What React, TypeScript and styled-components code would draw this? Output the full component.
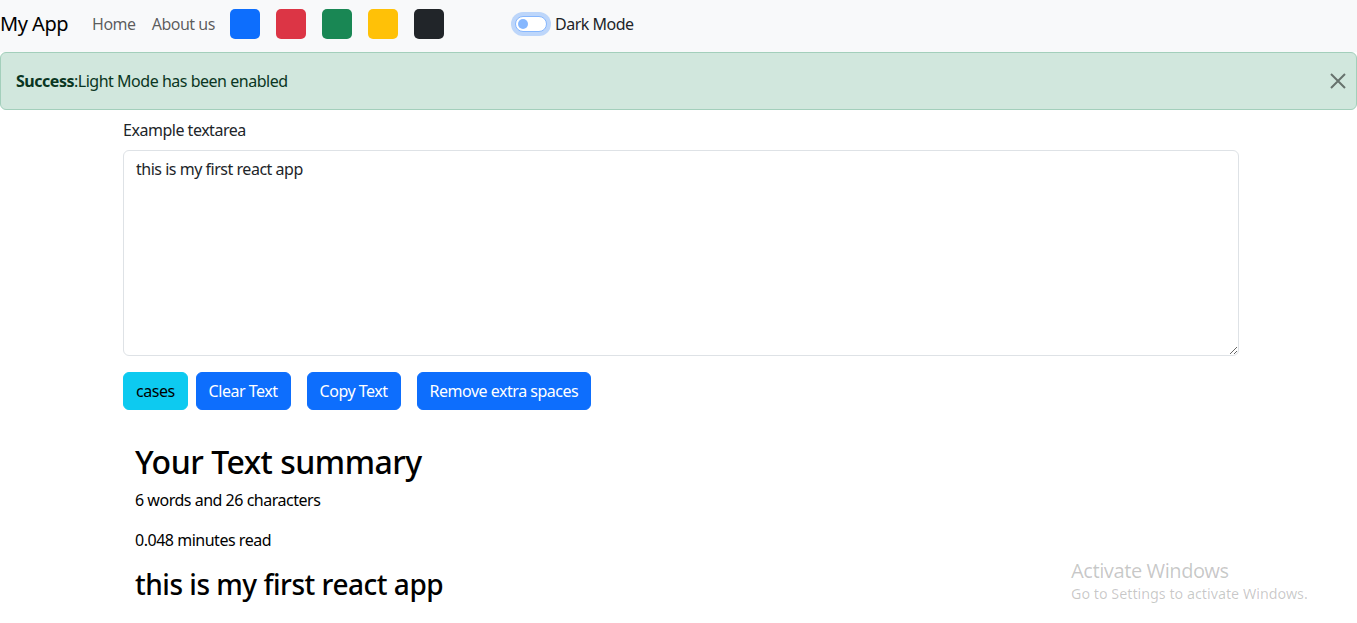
import React from "react";
import styled, { createGlobalStyle } from "styled-components";

const FONT = `"Noto Sans", "Open Sans", Arial, sans-serif`;

const Global = createGlobalStyle`
  html, body { margin: 0; padding: 0; }
  body {
    font-family: ${FONT};
    font-size: 16px;
    line-height: 1.5;
    letter-spacing: -0.03em;
    color: #212529;
    background: #fff;
  }
  * { box-sizing: border-box; }
`;

const Page = styled.div`
  position: relative;
  width: 1357px;
  height: 623px;
  overflow: hidden;
`;

const Navbar = styled.nav`
  display: flex;
  align-items: center;
  height: 52px;
  background: #f8f9fa;
  padding-bottom: 4px;
`;

const Brand = styled.span`
  font-size: 20px;
  color: #000;
  margin-right: 16px;
  line-height: 30px;
`;

const NavLink = styled.a`
  padding: 8px;
  color: rgba(0, 0, 0, 0.65);
  text-decoration: none;
  font-size: 16px;
`;

const Swatches = styled.div`
  display: flex;
  gap: 16px;
  margin-left: 7px;
`;

const Swatch = styled.div<{ $c: string }>`
  width: 30px;
  height: 30px;
  border-radius: 5px;
  background: ${(p) => p.$c};
`;

const SwitchWrap = styled.label`
  display: flex;
  align-items: center;
  margin-left: 71px;
  gap: 8px;
  color: #212529;
  font-size: 16px;
`;

const SwitchTrack = styled.span`
  position: relative;
  width: 32px;
  height: 16px;
  border-radius: 16px;
  background: #fff;
  border: 1px solid #86b7fe;
  box-shadow: 0 0 0 4px rgba(13, 110, 253, 0.25);
`;

const SwitchKnob = styled.span`
  position: absolute;
  left: 2px;
  top: 2px;
  width: 10px;
  height: 10px;
  border-radius: 50%;
  background: #86b7fe;
`;

const Alert = styled.div`
  display: flex;
  align-items: center;
  justify-content: space-between;
  background: #d1e7dd;
  border: 1px solid #a3cfbb;
  border-radius: 6px;
  color: #0a3622;
  padding: 16px 6px 16px 15px;
  height: 58px;
`;

const CloseBtn = styled.button`
  display: flex;
  align-items: center;
  justify-content: center;
  width: 24px;
  height: 24px;
  padding: 0;
  border: 0;
  background: transparent;
  opacity: 0.5;
`;

const Container = styled.main`
  width: 1116px;
  margin-left: 123px;
  padding-top: 8px;
`;

const Label = styled.label`
  display: block;
  margin-bottom: 8px;
`;

const TextArea = styled.textarea`
  display: block;
  width: 100%;
  height: 206px;
  padding: 6px 12px;
  font-family: ${FONT};
  font-size: 16px;
  line-height: 1.5;
  letter-spacing: -0.03em;
  color: #212529;
  border: 1px solid #dee2e6;
  border-radius: 6px;
  margin: 0 0 16px;
  outline: none;
`;

const ButtonRow = styled.div`
  display: flex;
`;

const Btn = styled.button<{ $info?: boolean; $mx?: number }>`
  font-family: ${FONT};
  font-size: 16px;
  line-height: 1.5;
  letter-spacing: -0.03em;
  padding: 6px 12px;
  height: 38px;
  border-radius: 6px;
  border: 1px solid ${(p) => (p.$info ? "#0dcaf0" : "#0d6efd")};
  background: ${(p) => (p.$info ? "#0dcaf0" : "#0d6efd")};
  color: ${(p) => (p.$info ? "#000" : "#fff")};
  margin: 0 ${(p) => p.$mx ?? 0}px;
`;

const Summary = styled.section`
  padding: 0 12px;
  margin-top: 33px;
`;

const H2 = styled.h2`
  font-size: 32px;
  font-weight: 500;
  line-height: 1.2;
  margin: 0 0 7px;
  color: #000;
`;

const P = styled.p`
  margin: 0 0 16px;
  color: #000;
`;

const H3 = styled.h3`
  font-size: 28px;
  font-weight: 500;
  line-height: 1.2;
  margin: 0;
  color: #000;
`;

const Watermark = styled.div`
  position: absolute;
  left: 1071px;
  top: 558px;
  color: rgba(0, 0, 0, 0.22);
  font-family: ${FONT};
`;

const WmTitle = styled.div`
  font-size: 20px;
  line-height: 26px;
`;

const WmSub = styled.div`
  font-size: 14.3px;
  line-height: 20px;
  letter-spacing: 0;
`;

export default function App() {
  return (
    <Page>
      <Global />
      <Navbar>
        <Brand>My App</Brand>
        <NavLink>Home</NavLink>
        <NavLink>About us</NavLink>
        <Swatches>
          {["#0d6efd", "#dc3545", "#198754", "#ffc107", "#212529"].map((c) => (
            <Swatch key={c} $c={c} />
          ))}
        </Swatches>
        <SwitchWrap>
          <SwitchTrack>
            <SwitchKnob />
          </SwitchTrack>
          Dark Mode
        </SwitchWrap>
      </Navbar>
      <Alert>
        <span>
          <strong>Success</strong>:Light Mode has been enabled
        </span>
        <CloseBtn aria-label="Close">
          <svg width="16" height="16" viewBox="0 0 16 16">
            <path d="M1 1 L15 15 M15 1 L1 15" stroke="#000" strokeWidth="2" />
          </svg>
        </CloseBtn>
      </Alert>
      <Container>
        <Label>Example textarea</Label>
        <TextArea defaultValue="this is my first react app" />
        <ButtonRow>
          <Btn $info>cases</Btn>
          <Btn $mx={8}>Clear Text</Btn>
          <Btn $mx={8}>Copy Text</Btn>
          <Btn $mx={8}>Remove extra spaces</Btn>
        </ButtonRow>
        <Summary>
          <H2>Your Text summary</H2>
          <P>6 words and 26 characters</P>
          <P>0.048 minutes read</P>
          <H3>this is my first react app</H3>
        </Summary>
      </Container>
      <Watermark>
        <WmTitle>Activate Windows</WmTitle>
        <WmSub>Go to Settings to activate Windows.</WmSub>
      </Watermark>
    </Page>
  );
}
